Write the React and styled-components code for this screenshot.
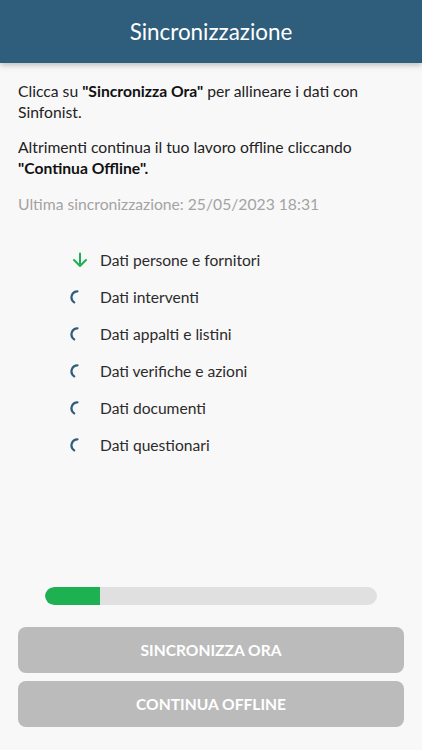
import styled, { createGlobalStyle } from "styled-components";

const GlobalStyle = createGlobalStyle`
    html, body {
        margin: 0;
        padding: 0;
        background: #f9f8f9;
        font-family: Lato, "Noto Sans", sans-serif;
    }
`;

const Screen = styled.div`
    width: 422px;
    height: 750px;
    display: flex;
    flex-direction: column;
    background: #f9f8f9;
    overflow: hidden;
`;

const Header = styled.header`
    height: 63px;
    flex-shrink: 0;
    display: flex;
    align-items: center;
    justify-content: center;
    background: #2f5d7c;
    box-shadow: 0 2px 6px rgba(0, 0, 0, 0.25);
    color: #fff;
    font-size: 22.4px;
    position: relative;
    z-index: 1;
`;

const Body = styled.main`
    flex: 1;
    display: flex;
    flex-direction: column;
    padding: 18px 18px 23px;
`;

const Intro = styled.div``;

const Paragraph = styled.p`
    margin: 0 0 14px;
    font-size: 15.7px;
    line-height: 21px;
    color: #222;

    b {
        font-weight: 700;
        color: #111;
    }
`;

const LastSync = styled.p`
    margin: 15px 0 0;
    font-size: 15.7px;
    line-height: 21px;
    color: #a3a3a3;
`;

const List = styled.ul`
    list-style: none;
    margin: 34px 0 0;
    padding: 0 0 0 52px;
    display: flex;
    flex-direction: column;
    gap: 16px;
`;

const Item = styled.li`
    display: flex;
    align-items: center;
    height: 21px;
    font-size: 15.6px;
    color: #2b2b2b;
`;

const IconSlot = styled.span`
    width: 30px;
    display: flex;
    align-items: center;
    justify-content: flex-start;
`;

const Footer = styled.div`
    margin-top: auto;
    display: flex;
    flex-direction: column;
`;

const Track = styled.div`
    margin: 0 27px 22px;
    height: 18px;
    border-radius: 9px;
    background: #e0e0e0;
    overflow: hidden;
`;

const Fill = styled.div`
    height: 100%;
    background: #1db152;
    border-radius: 9px 0 0 9px;
`;

const Button = styled.button`
    height: 46px;
    border: none;
    border-radius: 8px;
    background: #bbbbbb;
    color: #fff;
    font-family: Lato, "Noto Sans", sans-serif;
    font-weight: 700;
    font-size: 15.6px;
    text-transform: uppercase;
    margin-top: ${(p) => (p.$first ? "0" : "8px")};
`;

function ArrowDown() {
    return (
        <svg width="16" height="16" viewBox="0 0 16 16" style={{ marginLeft: 2 }}>
            <path d="M8 1.5v12.5M2 8l6 6 6-6" fill="none" stroke="#1db152" strokeWidth="2" strokeLinecap="round" strokeLinejoin="round" />
        </svg>
    );
}

function Spinner() {
    return (
        <svg width="14" height="14" viewBox="0 0 14 14" style={{ marginLeft: 0 }}>
            <path d="M7.5 1.3A6 6 0 0 0 4.2 12.3" fill="none" stroke="#2f5d7c" strokeWidth="2.2" strokeLinecap="round" />
        </svg>
    );
}

const steps = [
    { label: "Dati persone e fornitori", done: true },
    { label: "Dati interventi" },
    { label: "Dati appalti e listini" },
    { label: "Dati verifiche e azioni" },
    { label: "Dati documenti" },
    { label: "Dati questionari" },
];

export default function App() {
    const progress = 16.6;
    return (
        <>
            <GlobalStyle />
            <Screen>
                <Header>Sincronizzazione</Header>
                <Body>
                    <Intro>
                        <Paragraph>
                            Clicca su <b>"Sincronizza Ora"</b> per allineare i dati con Sinfonist.
                        </Paragraph>
                        <Paragraph>
                            Altrimenti continua il tuo lavoro offline cliccando <b>"Continua Offline".</b>
                        </Paragraph>
                        <LastSync>Ultima sincronizzazione: 25/05/2023 18:31</LastSync>
                    </Intro>
                    <List>
                        {steps.map((s) => (
                            <Item key={s.label}>
                                <IconSlot>{s.done ? <ArrowDown /> : <Spinner />}</IconSlot>
                                {s.label}
                            </Item>
                        ))}
                    </List>
                    <Footer>
                        <Track>
                            <Fill style={{ width: `${progress}%` }} />
                        </Track>
                        <Button $first>Sincronizza Ora</Button>
                        <Button>Continua Offline</Button>
                    </Footer>
                </Body>
            </Screen>
        </>
    );
}
